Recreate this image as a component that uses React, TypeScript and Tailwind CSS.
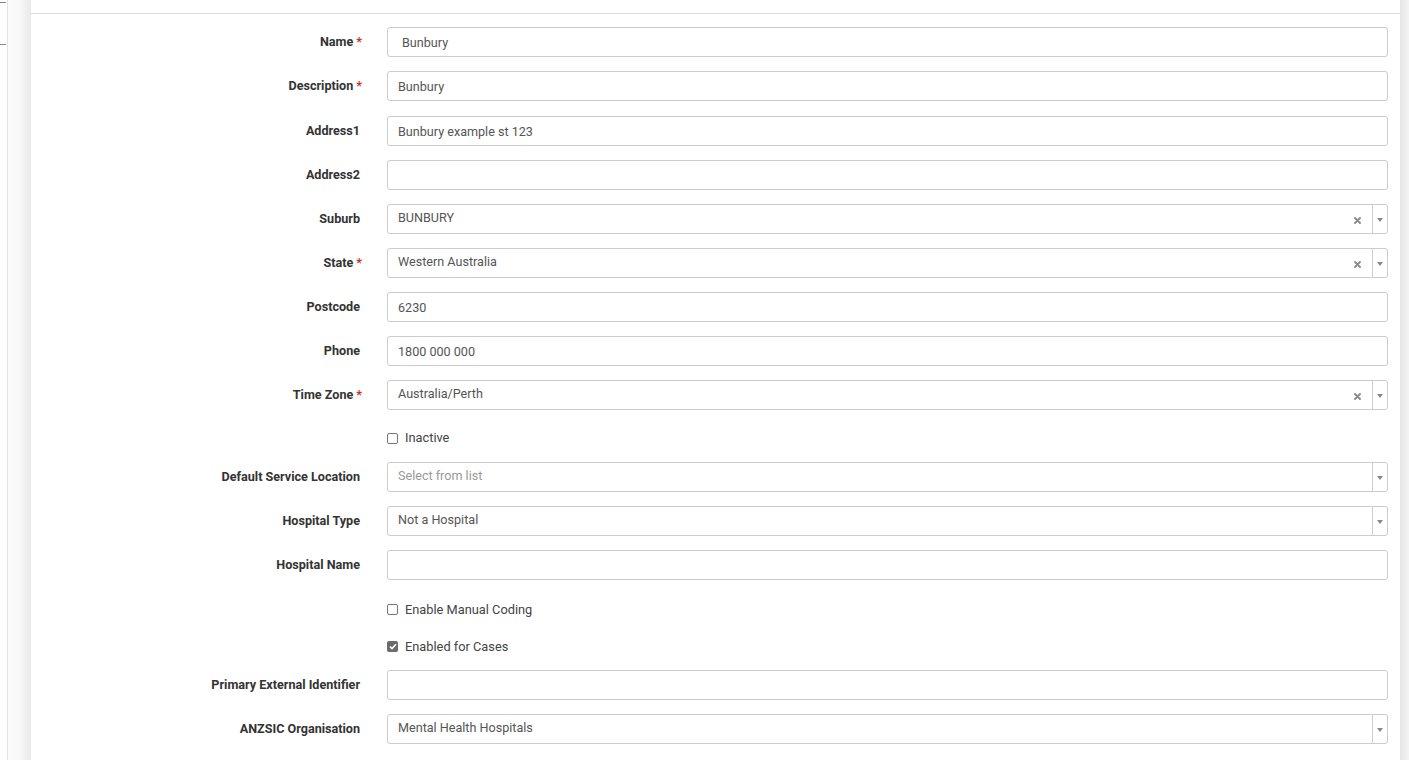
import type { ReactNode } from "react";

type Field =
  | { kind: "input"; label: string; required?: boolean; value?: string; indent?: boolean; extra?: boolean }
  | { kind: "select"; label: string; required?: boolean; value?: string; placeholder?: string; clearable?: boolean }
  | { kind: "check"; label: string; checked?: boolean; nudge?: string };

const fields: Field[] = [
  { kind: "input", label: "Name", required: true, value: "Bunbury", indent: true },
  { kind: "input", label: "Description", required: true, value: "Bunbury", extra: true },
  { kind: "input", label: "Address1", value: "Bunbury example st 123" },
  { kind: "input", label: "Address2", value: "" },
  { kind: "select", label: "Suburb", value: "BUNBURY", clearable: true },
  { kind: "select", label: "State", required: true, value: "Western Australia", clearable: true },
  { kind: "input", label: "Postcode", value: "6230" },
  { kind: "input", label: "Phone", value: "1800 000 000" },
  { kind: "select", label: "Time Zone", required: true, value: "Australia/Perth", clearable: true },
  { kind: "check", label: "Inactive", nudge: "pt-[4px]" },
  { kind: "select", label: "Default Service Location", placeholder: "Select from list" },
  { kind: "select", label: "Hospital Type", value: "Not a Hospital" },
  { kind: "input", label: "Hospital Name", value: "" },
  { kind: "check", label: "Enable Manual Coding", nudge: "pt-[7px]" },
  { kind: "check", label: "Enabled for Cases", checked: true, nudge: "pt-[5px]" },
  { kind: "input", label: "Primary External Identifier", value: "" },
  { kind: "select", label: "ANZSIC Organisation", value: "Mental Health Hospitals" },
];

const Row = ({ label, required, extra, children }: { label?: string; required?: boolean; extra?: boolean; children: ReactNode }) => (
  <div className={`flex items-center ${extra ? "mb-[1px]" : ""}`}>
    <div className="w-[329px] shrink-0 pt-[1px] text-right text-[12.6px] font-bold text-[#333] leading-none">
      {label}
      {required && <span className="ml-[3px] mr-[-2px] text-[#c9302c]">*</span>}
    </div>
    <div className="ml-[27px] flex-1">{children}</div>
  </div>
);

const Select = ({ value, placeholder, clearable }: { value?: string; placeholder?: string; clearable?: boolean }) => (
  <div className="flex h-[30px] items-stretch rounded-[3px] border border-[#ccc] bg-white">
    <div className={`flex-1 pl-[10px] pt-[4px] text-[12.6px] ${value ? "text-[#555]" : "text-[#999]"}`}>
      {value ?? placeholder}
    </div>
    {clearable && (
      <div className="flex w-[18px] items-center justify-start pt-[2px]">
        <svg width="7" height="7" viewBox="0 0 7 7">
          <path d="M1 1 L6 6 M6 1 L1 6" stroke="#888" strokeWidth="1.8" strokeLinecap="round" />
        </svg>
      </div>
    )}
    <div className="flex w-[15px] items-center justify-center border-l border-[#ccc] pt-[1px]">
      <svg width="6" height="4" viewBox="0 0 6 4">
        <path d="M0 0 L6 0 L3 4 Z" fill="#888" />
      </svg>
    </div>
  </div>
);

const Check = ({ label, checked, nudge }: { label: string; checked?: boolean; nudge?: string }) => (
  <div className={`flex h-[24px] items-center ${nudge ?? ""}`}>
    {checked ? (
      <span className="flex h-[11px] w-[11px] items-center justify-center rounded-[2px] bg-[#6b6b6b]">
        <svg width="8" height="7" viewBox="0 0 8 7">
          <path d="M1 3.6 L3 5.6 L7 1.2" stroke="#fff" strokeWidth="1.6" fill="none" />
        </svg>
      </span>
    ) : (
      <span className="h-[11px] w-[11px] rounded-[2px] border border-[#777] bg-white" />
    )}
    <span className="ml-[7px] text-[12.8px] text-[#444]">{label}</span>
  </div>
);

export default function App() {
  return (
    <div className="flex h-[760px] overflow-hidden bg-white font-['Roboto',sans-serif]">
      <div className="w-[8px] shrink-0 border-r border-[#e2e2e2] bg-white">
        <div className="mt-[2px] h-px w-[6px] bg-[#888]" />
        <div className="mt-[41px] h-px w-[6px] bg-[#888]" />
      </div>
      <div className="w-[23px] shrink-0 bg-gradient-to-r from-[#fbfbfb] via-[#f8f8f8] to-[#e9e9e9]" />
      <div className="flex-1 bg-white">
        <div className="h-[14px] border-b border-[#dcdcdc]" />
        <div className="flex flex-col gap-[14px] pt-[13px] pr-[12px]">
          {fields.map((f) => {
            if (f.kind === "check") {
              return (
                <Row key={f.label}>
                  <Check label={f.label} checked={f.checked} nudge={f.nudge} />
                </Row>
              );
            }
            if (f.kind === "select") {
              return (
                <Row key={f.label} label={f.label} required={f.required}>
                  <Select value={f.value} placeholder={f.placeholder} clearable={f.clearable} />
                </Row>
              );
            }
            return (
              <Row key={f.label} label={f.label} required={f.required} extra={f.extra}>
                <div
                  className={`h-[30px] rounded-[3px] border border-[#ccc] bg-white pt-[6px] text-[12.6px] text-[#555] ${
                    f.indent ? "pl-[14px]" : "pl-[10px]"
                  }`}
                >
                  {f.value}
                </div>
              </Row>
            );
          })}
        </div>
      </div>
      <div className="w-[9px] shrink-0 bg-gradient-to-r from-[#e6e6e6] to-[#f4f4f4]" />
    </div>
  );
}
